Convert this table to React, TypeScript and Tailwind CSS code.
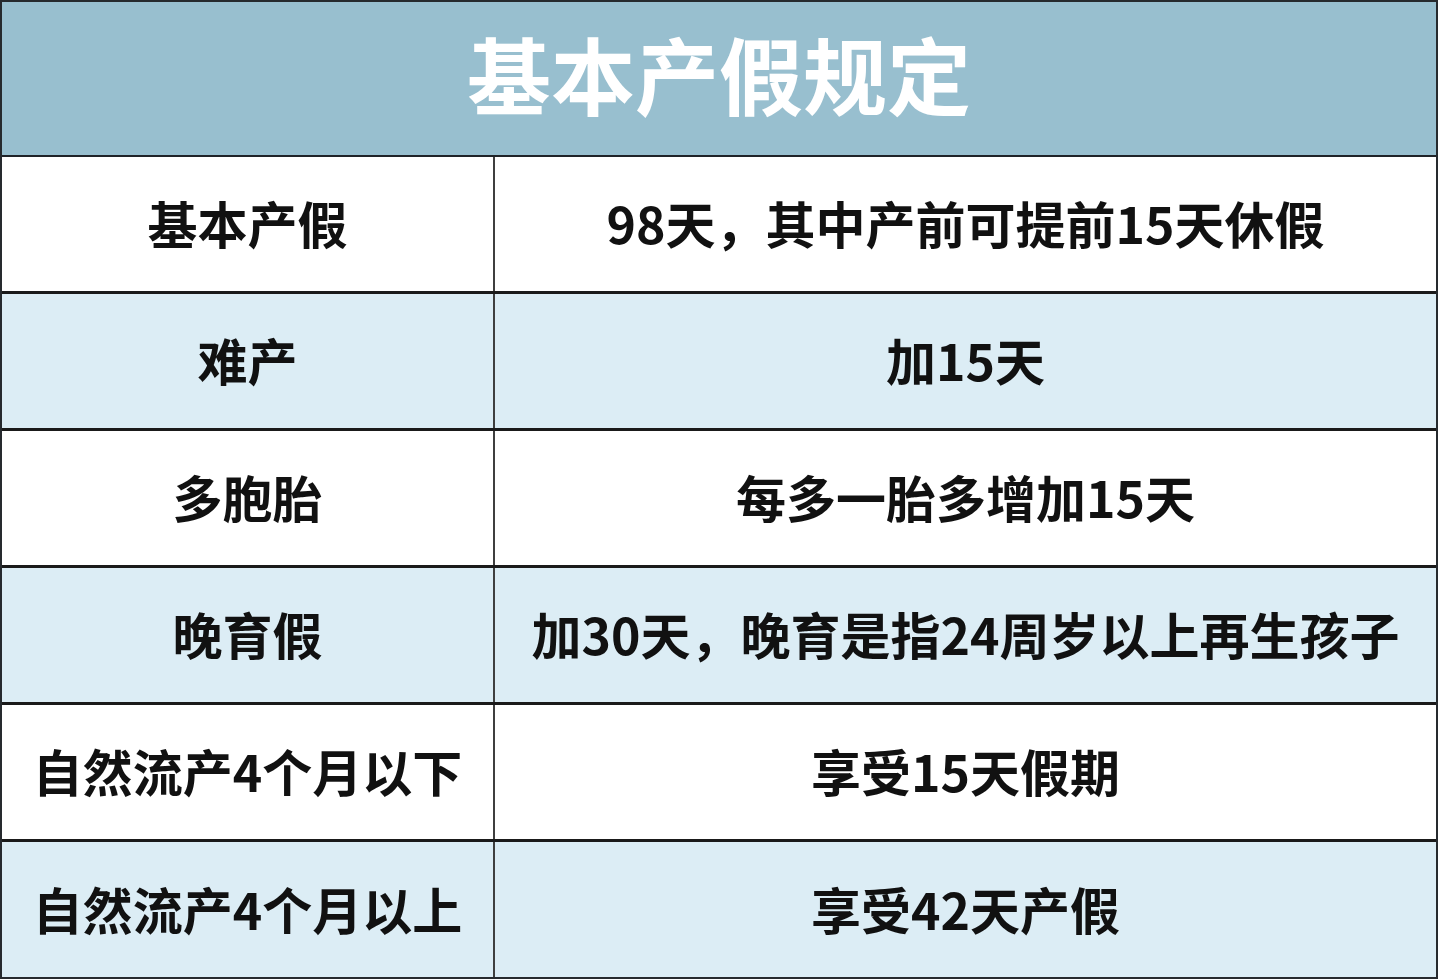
const rows = [
  { label: '基本产假', value: '98天，其中产前可提前15天休假', shaded: false },
  { label: '难产', value: '加15天', shaded: true },
  { label: '多胞胎', value: '每多一胎多增加15天', shaded: false },
  { label: '晚育假', value: '加30天，晚育是指24周岁以上再生孩子', shaded: true },
  { label: '自然流产4个月以下', value: '享受15天假期', shaded: false },
  { label: '自然流产4个月以上', value: '享受42天产假', shaded: true },
];

export default function App() {
  return (
    <div
      className="w-[1440px] h-[980px] bg-white overflow-hidden"
      style={{ fontFamily: '"Noto Sans CJK SC", "Noto Sans", sans-serif' }}
    >
      <div className="w-[1438px] h-[979px] border-2 border-[#262a2e] flex flex-col">
        {/* Title bar */}
        <div className="h-[155px] shrink-0 bg-[#98bfcf] border-b-2 border-[#1f2328] flex items-center justify-center pb-3">
          <h1 className="text-[84px] font-bold text-white leading-none">基本产假规定</h1>
        </div>

        {/* Rows */}
        {rows.map((row, i) => {
          const last = i === rows.length - 1;
          return (
            <div
              key={row.label}
              className={`grid grid-cols-[493px_1fr] ${
                last ? 'flex-1' : 'h-[137px] shrink-0 border-b-[3px] border-[#1a1a1a]'
              } ${row.shaded ? 'bg-[#dcedf5]' : 'bg-white'}`}
            >
              <div className="flex items-center justify-center border-r-2 border-[#3f3f3f] pb-1">
                <span className="text-[50px] font-bold text-[#111] leading-none">{row.label}</span>
              </div>
              <div className="flex items-center justify-center pb-1">
                <span className="text-[50px] font-bold text-[#111] leading-none">{row.value}</span>
              </div>
            </div>
          );
        })}
      </div>
    </div>
  );
}
